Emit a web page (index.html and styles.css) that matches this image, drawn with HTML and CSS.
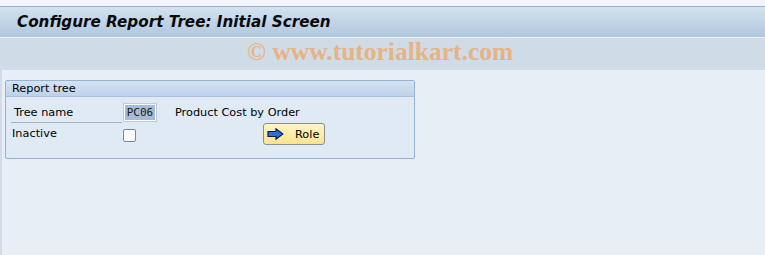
FILE: index.html
```html
<!DOCTYPE html>
<html lang="en">
<head>
  <meta charset="UTF-8" />
  <title>Configure Report Tree: Initial Screen</title>
  <link rel="stylesheet" href="styles.css">
</head>
<body>
  <div class="top-strip"></div>
  <div class="title-bar">
    <h1 class="title">Configure Report Tree: Initial Screen</h1>
  </div>
  <div class="toolbar">
    <span class="watermark">&copy; www.tutorialkart.com</span>
  </div>

  <div class="content">
    <div class="group">
      <div class="group-head">Report tree</div>
      <div class="group-body">
        <div class="row">
          <span class="label label-line">Tree name</span>
          <span class="field"><span class="field-sel">PC06</span></span>
          <span class="desc">Product Cost by Order</span>
        </div>
        <div class="row">
          <span class="label">Inactive</span>
          <span class="checkbox"></span>
          <button type="button" class="role-btn">
            <svg width="17" height="12" viewBox="0 0 17 12">
              <path d="M1 3.5 H9 V0.8 L15.8 6 L9 11.2 V8.5 H1 Z" fill="#2c6fe0" stroke="#0a1c50" stroke-width="1.2"/>
            </svg>
            <span>Role</span>
          </button>
        </div>
      </div>
    </div>
  </div>
</body>
</html>
```

FILE: styles.css
```css
body {
  margin: 0;
  width: 765px;
  height: 255px;
  overflow: hidden;
  background: #e8eef6;
  font-family: Tahoma, 'DejaVu Sans', sans-serif;
  font-size: 11.3px;
  color: #000;
}

.top-strip {
  height: 6px;
  background: #f1f4f9;
  border-bottom: 1px solid #a3b0c6;
}

.title-bar {
  height: 30px;
  background: linear-gradient(#d3e2f0, #afc7de);
  border-bottom: 1px solid #eef3f8;
  display: flex;
  align-items: center;
  padding-left: 17px;
}

.title {
  margin: 0;
  font-family: 'DejaVu Sans', sans-serif;
  font-size: 15.2px;
  font-weight: bold;
  font-style: italic;
  color: #0a0a0a;
}

.toolbar {
  height: 32px;
  background: #cfdce7;
  display: flex;
  align-items: center;
  padding-left: 247px;
}

.watermark {
  font-family: 'Liberation Serif', serif;
  font-weight: bold;
  font-size: 25.5px;
  color: #e8b382;
  margin-top: -4px;
}

.content {
  height: 185px;
  border-left: 2px solid #d3dbe8;
  padding: 10px 0 0 3px;
}

.group {
  width: 408px;
  border: 1px solid #93b2d4;
  border-radius: 2px;
  background: #dfeaf5;
  height: 77px;
}

.group-head {
  height: 15px;
  line-height: 15px;
  padding-left: 6px;
  background: linear-gradient(#d5e3f2, #bcd2ea);
  border-bottom: 1px solid #a9c1dc;
}

.group-body {
  padding: 5px 0 0 5px;
}

.row {
  display: flex;
  align-items: center;
  height: 21px;
}

.label {
  width: 111px;
  padding-left: 1px;
}

.label-line {
  padding-left: 3px;
  width: 108px;
  height: 20px;
  line-height: 21px;
  border-bottom: 1px solid #a6b2c0;
}

.field {
  width: 34px;
  height: 19px;
  border: 1px solid #bfcad6;
  background: #fff;
  padding: 1px;
  box-sizing: border-box;
  margin: -1px 0 0 1px;
}

.field-sel {
  display: flex;
  align-items: center;
  justify-content: center;
  height: 100%;
  background: #a5bcd9;
  font-family: 'DejaVu Sans Mono', monospace;
  font-size: 11px;
  color: #1a1a1a;
}

.desc {
  margin-left: 18px;
}

.checkbox {
  width: 11px;
  height: 11px;
  border: 1px solid #7a8594;
  border-radius: 2px;
  background: #fff;
  margin-left: 0;
  margin-top: 3px;
}

.role-btn {
  margin-left: 127px;
  margin-top: 1px;
  width: 62px;
  height: 22px;
  border: 1px solid #8d8d8d;
  border-radius: 3px;
  background: linear-gradient(#fff6c8, #fbe28e);
  display: flex;
  align-items: center;
  padding: 0 0 0 3px;
  font-family: Tahoma, 'DejaVu Sans', sans-serif;
  font-size: 11.3px;
  color: #000;
  gap: 11px;
}
```
